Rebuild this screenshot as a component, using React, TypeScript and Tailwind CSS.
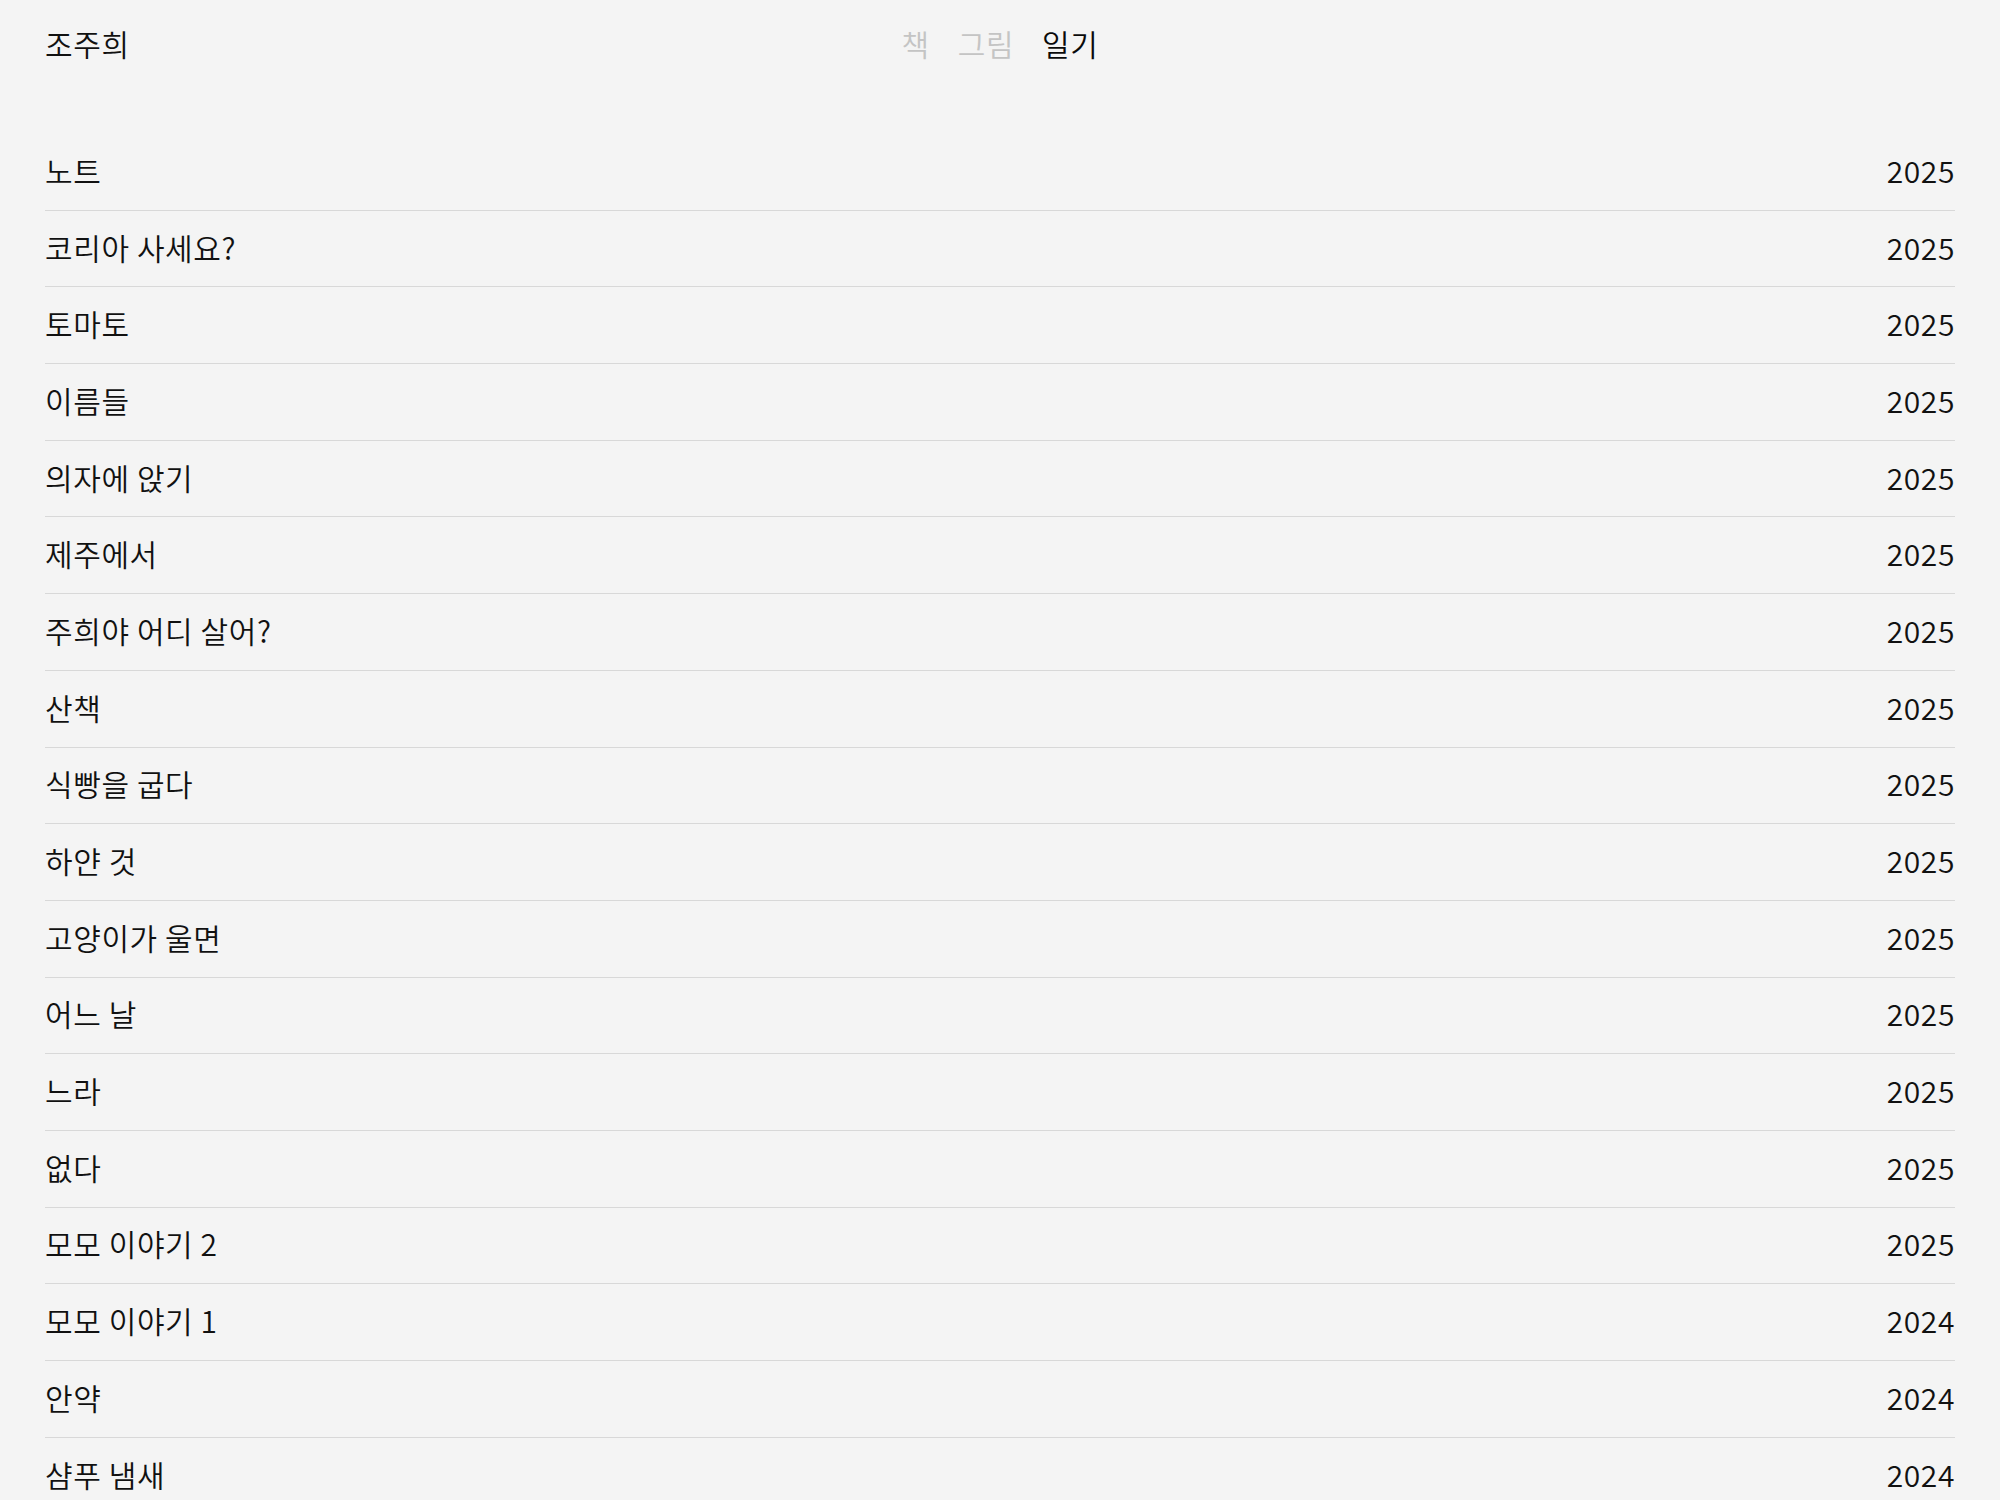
const rows: [string, string][] = [
  ["노트", "2025"],
  ["코리아 사세요?", "2025"],
  ["토마토", "2025"],
  ["이름들", "2025"],
  ["의자에 앉기", "2025"],
  ["제주에서", "2025"],
  ["주희야 어디 살어?", "2025"],
  ["산책", "2025"],
  ["식빵을 굽다", "2025"],
  ["하얀 것", "2025"],
  ["고양이가 울면", "2025"],
  ["어느 날", "2025"],
  ["느라", "2025"],
  ["없다", "2025"],
  ["모모 이야기 2", "2025"],
  ["모모 이야기 1", "2024"],
  ["안약", "2024"],
  ["샴푸 냄새", "2024"],
];

export default function App() {
  return (
    <div
      className="min-h-screen bg-[#f4f4f4] text-[#111] px-[45px] text-[30px] font-[350] tracking-[0.02em]"
      style={{ fontFamily: '"Noto Sans CJK KR", "Noto Sans", sans-serif' }}
    >
      <header className="grid grid-cols-3 items-center h-[86px]">
        <a className="justify-self-start">조주희</a>
        <nav className="justify-self-center flex gap-[28px]">
          <a className="text-[#c4c4c4]">책</a>
          <a className="text-[#c4c4c4]">그림</a>
          <a className="text-[#0a0a0a]">일기</a>
        </nav>
        <div />
      </header>

      <ul className="mt-[48px]">
        {rows.map(([title, year], i) => (
          <li
            key={i}
            className="flex items-center justify-between h-[76.7px] pb-[3px] border-b border-[#d8d8d8]"
          >
            <span>{title}</span>
            <span>{year}</span>
          </li>
        ))}
      </ul>
    </div>
  );
}
